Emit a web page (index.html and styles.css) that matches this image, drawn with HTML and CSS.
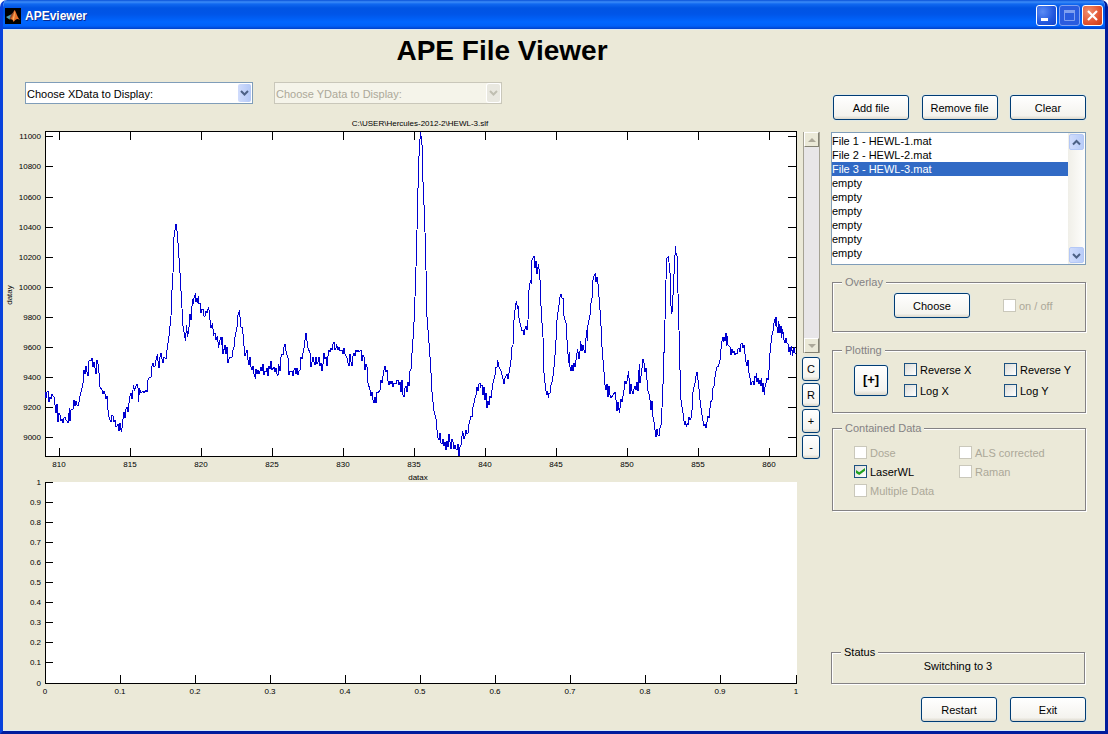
FILE: index.html
```html
<!DOCTYPE html>
<html lang="en">
  <head>
    <meta charset="UTF-8" />
    <meta name="viewport" content="width=device-width, initial-scale=1.0" />
    <title>APEviewer</title>
    <link rel="stylesheet" href="styles.css">
  </head>

  <body>
    <div class="window">
      <header class="titlebar">
        <svg class="logo" viewBox="0 0 16 16" aria-hidden="true">
          <rect width="16" height="16" fill="#000" />
          <path d="M1 9 L6 6.500 L7 9 L4.500 11.500 Z" fill="#4f9fb0" />
          <path d="M6 6.500 L8 4.500 L9.500 2 L8 9 L5 11.500 L4.500 11 Z" fill="#8a4a30" />
          <path d="M9.500 2 C11 3 12 9 15 12 C12 10 11 11 8.500 14 C8 12 7 11 5 11.500 C8 9 8.500 4 9.500 2 Z" fill="#e8702a" />
          <path d="M9.500 3 C10 5 10 9 8.500 13 C8 12 8 11 7.500 10.500 C9 8 9 5 9.500 3 Z" fill="#f8b060" />
        </svg>
        <span class="caption">APEviewer</span>
        <button class="win-btn" type="button" aria-label="Minimize">
          <svg viewBox="0 0 19 19"><rect x="4" y="12" width="7" height="3" fill="#fff" /></svg>
        </button>
        <button class="win-btn off" type="button" aria-label="Maximize" disabled>
          <svg viewBox="0 0 19 19"><path d="M4.500 5 V14.500 H14.500 V5" fill="none" stroke="#7f9ff0" /><rect x="4" y="4" width="11" height="3" fill="#7f9ff0" /></svg>
        </button>
        <button class="win-btn close" type="button" aria-label="Close">
          <svg viewBox="0 0 19 19"><path d="M5 5 L14 14 M14 5 L5 14" stroke="#fff" stroke-width="2.200" /></svg>
        </button>
      </header>

      <h1>APE File Viewer</h1>

      <main>
        <section class="plots">
          <div class="combos">
            <div class="combo">
              <select aria-label="XData"><option>Choose XData to Display:</option></select>
              <svg class="drop" viewBox="0 0 13 18" aria-hidden="true"><path d="M3 7 L6.500 10.500 L10 7" /></svg>
            </div>
            <div class="combo off">
              <select aria-label="YData" disabled><option>Choose YData to Display:</option></select>
              <svg class="drop" viewBox="0 0 13 18" aria-hidden="true"><path d="M3 7 L6.500 10.500 L10 7" /></svg>
            </div>
          </div>

          <div class="plot-area">
            <div class="figures">
              <svg class="figure" viewBox="4 116 796 366" role="img" aria-label="datay against datax">
                <rect class="paper" x="45" y="131" width="752" height="326" />
                <path class="axis" d="M45.500 131.500 H796.500 V456.500 H45.500 Z
                  M45 136.500 h8 M45 166.500 h8 M45 197.500 h8 M45 227.500 h8 M45 257.500 h8 M45 287.500 h8 M45 317.500 h8 M45 347.500 h8 M45 377.500 h8 M45 407.500 h8 M45 437.500 h8
                  M797 136.500 h-9 M797 166.500 h-9 M797 197.500 h-9 M797 227.500 h-9 M797 257.500 h-9 M797 287.500 h-9 M797 317.500 h-9 M797 347.500 h-9 M797 377.500 h-9 M797 407.500 h-9 M797 437.500 h-9
                  M59.500 131 v9 M130.500 131 v9 M201.500 131 v9 M272.500 131 v9 M343.500 131 v9 M414.500 131 v9 M485.500 131 v9 M556.500 131 v9 M627.500 131 v9 M698.500 131 v9 M769.500 131 v9
                  M59.500 457 v-9 M130.500 457 v-9 M201.500 457 v-9 M272.500 457 v-9 M343.500 457 v-9 M414.500 457 v-9 M485.500 457 v-9 M556.500 457 v-9 M627.500 457 v-9 M698.500 457 v-9 M769.500 457 v-9" />
                <polyline class="trace" points="45,392 46,398 47,392 48,391 49,402 50,397 51,399 52,394 53,396 54,397 55,405 56,413 57,404 58,422 59,413 60,415 61,421 62,419 63,423 64,418 65,417 66,420 67,421 68,423 69,413 69.5,408 70,421 71,410 73,409 74,400 75,406 76,401 77,405 78,406 79,402 80,396 81,392 82,388 83,383 84,370 85,374 86,366 87,372 88,376 89,361 90,360 91,361 92,358 93,367 94,362 95,368 96,374 97,360 98,364 99,373 100,387 102,390 103,394 104,391 105,394 106,399 107,396 108,410 109,417 110,420 111,422 112,415 113,416 114,422 115,420 116,427 117,426 118,424 119,431 120,423 121,430 121.7,432 122.5,422 124,412 125,418 126,409 127,407 128,412 129,403 130,396 131,393 132,399 133.500,385 134.5,391 136,386 137,384 138,388 138.500,402 139.500,388 141,393 143,391 144,393 146,390 147,392 148,380 149,378 151,377 152,366 153,363 154,367 155,366 156,360 157.500,354 158,361 159,368 160,357 161,353 162,359 163,363 164,357 166,359 167.500,346 169,336 171,316 172,290 173.500,264 174,237 176,224 177.500,235 178.500,250 180,273 181.500,299 183,326 185.500,341 186.500,325 187.500,337 189,327 190,314 191,320 192.500,299 193,304 194,298 195.500,293 196,302 197,298 197.5,303 198.5,296 199,304 200,303 201,313 202,309 203,309 204,316 205,316 206,311 207,313 208.500,307 209.5,313 210,320 211,328 212.5,323 213.5,335 215,333 216,340 217.500,336 218.500,348 219.5,342 221,337 222,345 222.5,337 223,354 225,345 226,354 227,347 228,363 229,359 230,357 232,357 233,350 234,347 235,337 237,327 238,315 239.500,310 240.5,323 241,327 242.500,328 244,346 245,356 246,353 247,350 248,360 249,365 250,357 251,367 252,370 253,366 254,374 255.500,379 256,369 257,374 258,370 259,374 260,371 261,367 262,371 263,364 264,375 265,371 266,372 267,368 268,376 269,366 270,369 271,361 272,370 274,367 275,372 276,368 277,374 278,376 278.5,364 280,371 281,357 282,354 283,355 284,347 285,344 286,351 288,358 289,375 290,371 292,371 293,376 294,370 295,368 296,374 297,368 298,375 299,371 300,370 301,357 302,359 303,353 304,348 306,333 307,341 308,348 310,353 311,367 312,362 313,357 314,362 315,365 316,357 317,364 318,362 319,357 320,366 321,363 322,371 323,364 324,353 325,359 326,357 327,366 328,356 329,350 330,352 331,348 332,350 333,344 334,342 335,350 336,348 336.5,344 338,350 339,347 340,351 342,350 343,354 344,348 345,354 347,358 348,363 349,366 350,354 351,362 352,366 353,356 354,353 355,356 356,350 357,352 358,350 359,352 361,350 362,361 363,355 364,357 365,370 366,364 367,367 368,383 370,390 371,396 372,392 373,400 374,403 375,397 376,403 377,392 378,393 380,390 381,380 382,383 383,376 384,370 385,366 386,372 387,370 388,381 389,385 390,381 391,384 392,381 393,387 394,383 396,384 397,380 398,380 399,385 400,382 401,392 402,380 403,395 404,397 405,388 406,386 407,392 408,382 409,386 410,371 411,369 412,353 413.700,330 415,297 416,267 417,230 418.600,163 419.700,143 420.500,132 421.500,140 422.500,150 423,182 424.700,220 426,270 427,317 429,343 430.700,367 432,392 434,411 436,419 437,430 438,438 439,440 440,433 441,443 442,444 443,439 444,446 445,442 446,450 447,441 448,447 449,434 450,442 451,449 452,439 453,442 454,449 455,445 456,449 457,450 458,444 459,456 460,447 461,445 462.600,431 464,439 465,436 466,430 467,434 468,433 469,424 470,420 471,416 472,417 473,407 474,403 475,398 476,395 477,387 478,391 479,384 480,383 480.5,387 482,385 483,395 484,387 485,400 486,393 487,408 488,401 489,405 490,396 491,398 492,390 493,383 495,375 496,367 497,367 497.500,360 499,367 501,371 502,375 503,379 504,384 505,378 507,374 508,379 510,367 511,360 512,347 513,345 514,320 515,310 515.5,306 516.500,301 517.5,309 518.500,306 519,318 521,327 522,331 523,330 524,335 525,329 526,326 527,330 528,320 529,290 530.5,280 531.3,284 532,260 534,256 535,268 536,261 537,274 538.500,264 540,280 541,306 541.600,317 543,337 543.700,370 545,383 546,391 547,395 547.5,391 548.600,398 549,393 550,393 551,385 552,382 553,376 554,367 555.5,350 557,320 559,305 560,297 561,294 562,298 563,298 564,316 566,323 567.600,350 569,363 569.5,352 570,367 571,371 572,365 573,371 574,363 575,367 576,360 577.600,349 579,359 580,351 580.600,341 582,351 583,345 584,350 585,353 586.600,330 587.500,341 588,325 589,320 590,315 591,303 592,298 593,280 594,276 595.300,274 596,282 597,277 597.5,277 599,297 600.600,317 602,347 603.600,367 605,385 606,390 607,384 608,397 609,386 610,395 611,398 613,395 615,392 616,400 617,411 618,402 619.400,413 621,399 622,402 623,396 624,390 625,381 626,384 627,381 628.600,371 630,394 631,384 632,391 633,394 634,389 635,386 636,390 637,382 638,391 639.300,364 640,383 641.5,373 643,359 644,363 645,372 646,368 647,380 648,391 649,394 650,400 651,410 652,401 653,417 654,422 655,430 656,437 657,429 658,435 659,436 660,428 661,425 662,408 663,384 664,353 665,320 666,280 667,258 668.5,257 670,273 671,306 671.600,314 672.500,309 673.600,280 674.5,267 675.400,246 676,253 677,256 678,293 679,330 680,370 681,400 683,413 684,421 685,425 685.5,421 686.5,427 687.5,423 688,425 689,417 690,420 691,418 692,410 693,392 694,387 695,383 696,376 697,372 698.600,384 700,400 701.600,413 703,421 704,426 705,424 706,428 707,422 708,416 709,418 710.600,402 712,400 713,388 714,386 715,377 716,371 717,367 718.5,366 720,360 721,349 722.600,337 723.5,342 724,337 725,341 726,333 726.5,346 727.3,336 728,345 730,347 731,355 732,349 733,353 734,351 735,355 736,353 737,354 738,349 739,348 740,352 741,344 742,343 743,348 744,345 745,354 746,362 747,366 748,360 749,373 750,378 751,385 752,382 753,381 754,385 755,376 756,378 756.500,373 757,382 758,378 759,384 760,380 761,386 761.5,378 762.5,392 763,383 764.3,395 765,387 766,383 767,378 768,380 769,370 770,353 771.600,337 773,331 774,323 774.600,319 775.5,326 776,317 777,327 778,333 778.700,321 780,333 781,326 781.500,338 782.600,329 784,340 785,343 786,338 787,343 788,344 789,352 790,347 790.5,355 791.600,346 792.600,356 793.5,349 794.700,348 795,353 796,353" />
                <g class="tick y">
                  <text x="41" y="139">11000</text>
                  <text x="41" y="169">10800</text>
                  <text x="41" y="200">10600</text>
                  <text x="41" y="230">10400</text>
                  <text x="41" y="260">10200</text>
                  <text x="41" y="290">10000</text>
                  <text x="41" y="320">9800</text>
                  <text x="41" y="350">9600</text>
                  <text x="41" y="380">9400</text>
                  <text x="41" y="410">9200</text>
                  <text x="41" y="440">9000</text>
                </g>
                <g class="tick x">
                  <text x="59" y="467">810</text>
                  <text x="130" y="467">815</text>
                  <text x="201" y="467">820</text>
                  <text x="272" y="467">825</text>
                  <text x="343" y="467">830</text>
                  <text x="414" y="467">835</text>
                  <text x="485" y="467">840</text>
                  <text x="556" y="467">845</text>
                  <text x="627" y="467">850</text>
                  <text x="698" y="467">855</text>
                  <text x="769" y="467">860</text>
                  <text x="420" y="126">C:\USER\Hercules-2012-2\HEWL-3.slf</text>
                  <text x="418" y="480">datax</text>
                  <text transform="translate(12 295) rotate(-90)">datay</text>
                </g>
              </svg>

              <svg class="figure" viewBox="4 482 796 216" role="img" aria-label="Empty plot">
                <rect class="paper" x="45" y="482" width="752" height="202" />
                <path class="axis" d="M45.500 482 V683.500 H797
                  M45 482.500 h8 M45 502.500 h8 M45 522.500 h8 M45 542.500 h8 M45 562.500 h8 M45 582.500 h8 M45 602.500 h8 M45 622.500 h8 M45 642.500 h8 M45 662.500 h8
                  M120.500 684 v-9 M195.500 684 v-9 M270.500 684 v-9 M345.500 684 v-9 M420.500 684 v-9 M495.500 684 v-9 M570.500 684 v-9 M645.500 684 v-9 M720.500 684 v-9 M796.500 684 v-9" />
                <g class="tick y">
                  <text x="41" y="485">1</text>
                  <text x="41" y="505">0.9</text>
                  <text x="41" y="525">0.8</text>
                  <text x="41" y="545">0.7</text>
                  <text x="41" y="565">0.6</text>
                  <text x="41" y="585">0.5</text>
                  <text x="41" y="605">0.4</text>
                  <text x="41" y="625">0.3</text>
                  <text x="41" y="645">0.2</text>
                  <text x="41" y="665">0.1</text>
                  <text x="41" y="686">0</text>
                </g>
                <g class="tick x">
                  <text x="45" y="694">0</text>
                  <text x="120" y="694">0.1</text>
                  <text x="195" y="694">0.2</text>
                  <text x="270" y="694">0.3</text>
                  <text x="345" y="694">0.4</text>
                  <text x="420" y="694">0.5</text>
                  <text x="495" y="694">0.6</text>
                  <text x="570" y="694">0.7</text>
                  <text x="645" y="694">0.8</text>
                  <text x="720" y="694">0.9</text>
                  <text x="796" y="694">1</text>
                </g>
              </svg>
            </div>

            <div class="tools">
              <div class="slider">
                <button type="button" aria-label="Up" disabled><svg viewBox="0 0 8 4"><path d="M0 4 L4 0 L8 4 Z" /></svg></button>
                <button type="button" aria-label="Down" disabled><svg viewBox="0 0 8 4"><path d="M0 0 L4 4 L8 0 Z" /></svg></button>
              </div>
              <button class="btn" type="button">C</button>
              <button class="btn" type="button">R</button>
              <button class="btn" type="button">+</button>
              <button class="btn" type="button">-</button>
            </div>
          </div>
        </section>

        <aside class="side">
          <div class="row">
            <button class="btn" type="button">Add file</button>
            <button class="btn" type="button">Remove file</button>
            <button class="btn" type="button">Clear</button>
          </div>

          <div class="filelist">
            <select size="9" aria-label="Files">
              <option>File 1 - HEWL-1.mat</option>
              <option>File 2 - HEWL-2.mat</option>
              <option selected>File 3 - HEWL-3.mat</option>
              <option>empty</option>
              <option>empty</option>
              <option>empty</option>
              <option>empty</option>
              <option>empty</option>
              <option>empty</option>
            </select>
            <div class="scroll">
              <button type="button" aria-label="Scroll up"><svg viewBox="0 0 13 15"><path d="M3 9.500 L6.500 6 L10 9.500" /></svg></button>
              <button type="button" aria-label="Scroll down"><svg viewBox="0 0 13 15"><path d="M3 6 L6.500 9.500 L10 6" /></svg></button>
            </div>
          </div>

          <fieldset class="overlay">
            <legend>Overlay</legend>
            <div class="inner">
              <button class="btn" type="button">Choose</button>
              <label class="off"><input type="checkbox" disabled>on / off</label>
            </div>
          </fieldset>

          <fieldset class="plotting">
            <legend>Plotting</legend>
            <div class="inner">
              <button class="btn plus" type="button">[+]</button>
              <div class="checks">
                <label><input type="checkbox">Reverse X</label>
                <label><input type="checkbox">Reverse Y</label>
                <label><input type="checkbox">Log X</label>
                <label><input type="checkbox">Log Y</label>
              </div>
            </div>
          </fieldset>

          <fieldset class="contained">
            <legend>Contained Data</legend>
            <div class="checks">
              <label class="off"><input type="checkbox" disabled>Dose</label>
              <label class="off"><input type="checkbox" disabled>ALS corrected</label>
              <label><input type="checkbox" checked>LaserWL</label>
              <label class="off"><input type="checkbox" disabled>Raman</label>
              <label class="off"><input type="checkbox" disabled>Multiple Data</label>
            </div>
          </fieldset>

          <fieldset class="status">
            <legend>Status</legend>
            <output>Switching to 3</output>
          </fieldset>

          <div class="row end">
            <button class="btn" type="button">Restart</button>
            <button class="btn" type="button">Exit</button>
          </div>
        </aside>
      </main>
    </div>
  </body>
</html>
```
FILE: styles.css
```css
* {
  box-sizing: border-box;
}
body {
  margin: 0;
  background: #fff;
  color: #000;
  font-family: "Liberation Sans", Arial, sans-serif;
  font-size: 11px;
  line-height: 14px;
}
button,
select,
input {
  margin: 0;
  font: inherit;
  color: inherit;
}
button svg {
  display: block;
}

/* window frame */
.window {
  display: flex;
  flex-direction: column;
  min-height: 100vh;
  border: 3px solid;
  border-color: #0850d8 #001c9c #001c9c #0842dc;
  border-top: 0;
  border-radius: 7px 7px 0 0;
  overflow: hidden;
}
.titlebar {
  display: flex;
  align-items: center;
  gap: 2px;
  height: 29px;
  margin: 0 -3px;
  padding: 2px 5px 0;
  background: linear-gradient(#0850d8 0, #3c8cf8 2px, #1068f0 4px, #0054e3 8px, #0055e8 14px, #0066ff 22px, #0060f8 26px, #0040c8 29px);
}
.logo {
  width: 16px;
  height: 16px;
}
.caption {
  flex: 1;
  padding-left: 2px;
  color: #fff;
  font-size: 12px;
  font-weight: bold;
  text-shadow: 1px 1px #0a2a90;
}
.win-btn {
  width: 21px;
  height: 21px;
  padding: 0;
  border: 1px solid #fff;
  border-radius: 3px;
  background: radial-gradient(circle at 30% 30%, #5b8cf5, #2257dd 60%, #1444c8);
}
.win-btn.off {
  border-color: #7fa0f0;
  background: #2a5cdf;
}
.win-btn.close {
  background: radial-gradient(circle at 30% 30%, #f09070, #e25330 60%, #c83810);
}

/* client area */
h1 {
  height: 53px;
  margin: 0;
  padding: 6px 104px 0 0;
  background: #ebe9d8;
  box-shadow: inset 0 1px #d8e8f8;
  font-size: 28px;
  line-height: 32px;
  text-align: center;
}
main {
  display: flex;
  flex: 1;
  padding: 0 19px 9px 1px;
  background: #ebe9d8;
  box-shadow: inset 0 -1px #d8ecf8;
}
.plots {
  flex: 1;
  min-width: 0;
}
.combos {
  display: flex;
  gap: 21px;
  padding-left: 21px;
}
.combo {
  display: grid;
  width: 228px;
  height: 22px;
  border: 1px solid #7f9db9;
  background: #fff;
}
.combo select,
.combo .drop {
  grid-area: 1 / 1;
}
.combo select {
  appearance: none;
  width: 100%;
  padding: 2px 16px 0 1px;
  border: 0;
  border-radius: 0;
  background: none;
}
.drop {
  justify-self: end;
  align-self: center;
  width: 13px;
  height: 18px;
  margin-right: 1px;
  border-radius: 2px;
  background: linear-gradient(to right, #d0dcfc, #b4c8f6);
  pointer-events: none;
}
.drop path,
.scroll path {
  fill: none;
  stroke: #4d6185;
  stroke-width: 2;
}
.combo.off {
  border-color: #c9c7ba;
  background: #f5f4ea;
}
.combo.off select {
  color: #aca899;
  opacity: 1;
}
.combo.off .drop {
  background: #e9e8e0;
  box-shadow: 0 0 0 1px #fff;
}
.combo.off .drop path {
  stroke: #c0bfb2;
}

.plot-area {
  display: flex;
  gap: 2px;
  margin-top: 12px;
}
.figures {
  flex: 1;
  min-width: 0;
}
.figure {
  display: block;
  width: 100%;
  overflow: visible;
}
.paper {
  fill: #fff;
}
.axis {
  fill: none;
  stroke: #000;
  shape-rendering: crispEdges;
}
.trace {
  fill: none;
  stroke: #0000d0;
  shape-rendering: crispEdges;
}
.tick {
  font-size: 8px;
}
.tick.x {
  text-anchor: middle;
}
.tick.y {
  text-anchor: end;
}

.btn {
  width: 76px;
  height: 25px;
  padding: 0;
  border: 1px solid #003c74;
  border-radius: 3px;
  background: linear-gradient(#fff, #f4f3ee 85%, #dcd8cc);
  box-shadow: 0 0 0 1px #dfe8e6;
}
.tools {
  display: flex;
  flex-direction: column;
  gap: 2px;
  width: 18px;
  padding-top: 16px;
}
.tools .btn {
  width: 18px;
  height: 24px;
}
.slider {
  display: flex;
  flex-direction: column;
  justify-content: space-between;
  height: 221px;
  margin: 0 0 2px 1px;
  border: 1px solid #a5a294;
  border-width: 0 1px 0 1px;
  background: #e8e6e8;
}
.slider button {
  display: grid;
  place-items: center;
  height: 15px;
  padding: 0;
  border: 1px solid;
  border-color: #fff #848274 #848274 #fff;
  background: #ebe9d8;
}
.slider svg {
  width: 8px;
  height: 4px;
  fill: #aca899;
}

/* right hand column */
.side {
  display: flex;
  flex-direction: column;
  width: 255px;
  margin-left: 11px;
  padding-top: 13px;
}
.row {
  display: flex;
  justify-content: space-between;
  padding-left: 2px;
}
.row.end {
  justify-content: flex-end;
  gap: 13px;
  margin-top: 13px;
}
.filelist {
  display: flex;
  height: 133px;
  margin: 12px 0 10px;
  border: 1px solid #7f9db9;
  background: #fff;
}
.filelist select {
  flex: 1;
  padding: 1px 0;
  border: 0;
  border-radius: 0;
  background: #fff;
  overflow: hidden;
  outline: 0;
}
.filelist option {
  height: 14px;
  min-height: 14px;
  padding: 1px 0 0;
  line-height: 13px;
}
.filelist option:checked {
  background: linear-gradient(#316ac5, #316ac5);
  color: #fff;
}
.scroll {
  display: flex;
  flex-direction: column;
  justify-content: space-between;
  width: 17px;
  padding: 1px;
  background: linear-gradient(to right, #f0efe8, #fefefc);
}
.scroll button {
  width: 15px;
  height: 16px;
  padding: 0;
  border: 1px solid #b4c8f6;
  border-radius: 2px;
  background: linear-gradient(to right, #d0dcfc, #b8ccf8);
}

fieldset {
  min-width: 0;
  margin: 0 0 0 1px;
  padding: 0;
  border: 1px solid #848284;
  box-shadow: 1px 1px #fff, inset 1px 1px #fff;
}
legend {
  margin-left: 9px;
  padding: 0 3px;
  background: #ebe9d8;
  color: #848284;
}
.inner {
  display: flex;
  align-items: center;
}
.overlay .inner {
  gap: 33px;
  padding: 4px 0 13px 61px;
}
.plotting {
  margin-top: 11px;
}
.plotting .inner {
  gap: 16px;
  padding: 6px 0 15px 21px;
}
.plus {
  width: 34px;
  height: 31px;
  font-size: 13px;
  font-weight: bold;
}
.checks {
  display: grid;
  grid-template-columns: 100px auto;
  justify-content: start;
  row-gap: 8px;
}
.contained {
  margin-top: 8px;
}
.contained .checks {
  grid-template-columns: 105px auto;
  row-gap: 6px;
  padding: 11px 0 13px 21px;
}
label {
  display: flex;
  align-items: center;
  gap: 3px;
  height: 13px;
  white-space: nowrap;
}
label.off {
  color: #aca899;
}
input[type="checkbox"] {
  display: grid;
  place-items: center;
  appearance: none;
  width: 13px;
  height: 13px;
  border: 1px solid #1c5180;
  background: linear-gradient(135deg, #dcdcd7, #fff);
}
input[type="checkbox"]:disabled {
  border-color: #cac8bb;
  background: #fff;
}
input[type="checkbox"]:checked::before {
  content: "";
  width: 9px;
  height: 7px;
  background: #21a121;
  clip-path: polygon(0 29%, 36% 60%, 100% 0, 100% 40%, 36% 100%, 0 70%);
}
.status {
  margin: auto 1px 0 0;
}
.status legend {
  color: #000;
}
.status output {
  display: block;
  padding-bottom: 10px;
  text-align: center;
}
```
